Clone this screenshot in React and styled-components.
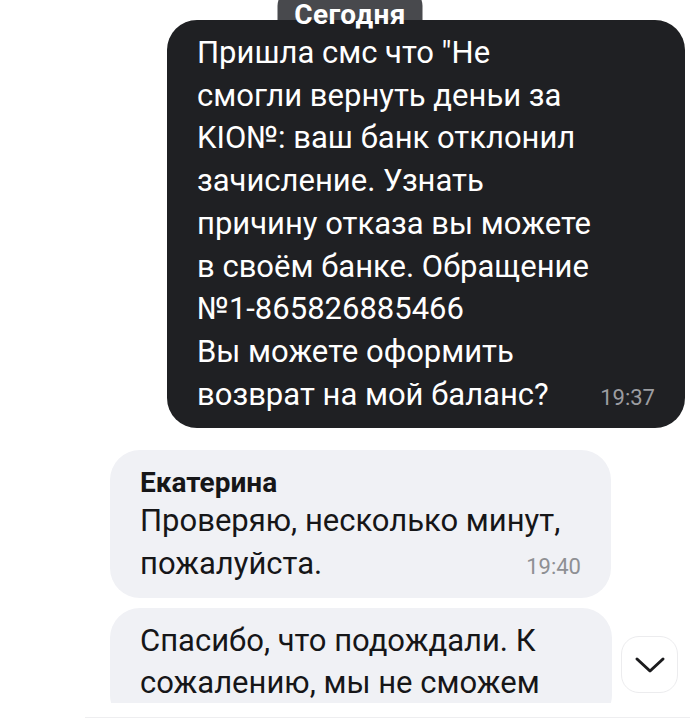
import React from "react";
import styled, { createGlobalStyle } from "styled-components";

const Global = createGlobalStyle`
  html, body { margin: 0; padding: 0; background: #ffffff; }
  body { font-family: Roboto, "Noto Sans", sans-serif; -webkit-font-smoothing: antialiased; }
`;

const Screen = styled.div`
  width: 700px;
  height: 719px;
  overflow: hidden;
  background: #ffffff;
  display: flex;
  flex-direction: column;
`;

const Feed = styled.div`
  position: relative;
  height: 703px;
  overflow: hidden;
  display: flex;
  flex-direction: column;
  padding-top: 20px;
  box-sizing: border-box;
  flex-shrink: 0;
`;

const DatePill = styled.div`
  position: absolute;
  top: -12px;
  left: 50%;
  transform: translateX(-50%);
  width: 145px;
  height: 42px;
  border-radius: 18px 18px 0 0;
  background: linear-gradient(#48494d 0 32px, transparent 32px);
  color: #ffffff;
  font-weight: 700;
  font-size: 28px;
  letter-spacing: 0.4px;
  line-height: 28px;
  text-align: center;
  padding-top: 13px;
  box-sizing: border-box;
  z-index: 2;
`;

const Bubble = styled.div`
  box-sizing: border-box;
  width: ${(p) => p.$w}px;
  align-self: ${(p) => (p.$out ? "flex-end" : "flex-start")};
  margin: ${(p) => (p.$out ? "0 15px 0 0" : "0 0 0 110px")};
  margin-top: ${(p) => p.$mt || 0}px;
  background: ${(p) => (p.$out ? "#1f2023" : "#f0f1f5")};
  color: ${(p) => (p.$out ? "#ffffff" : "#161618")};
  border-radius: 30px;
  padding: ${(p) => p.$pt || 12}px 30px ${(p) => p.$pb || 9}px 30px;
  font-size: 31px;
  line-height: 42.7px;
  flex-shrink: 0;
`;

const Author = styled.div`
  font-weight: 700;
  font-size: 28px;
  line-height: 30px;
  margin-bottom: 2px;
  color: #161618;
`;

const Line = styled.div`
  white-space: nowrap;
  display: flex;
  justify-content: space-between;
  align-items: baseline;
`;

const Time = styled.span`
  font-size: 22px;
  color: ${(p) => (p.$out ? "#9c9da1" : "#8e8f93")};
`;

const ScrollButton = styled.button`
  position: absolute;
  right: 22px;
  bottom: 10px;
  width: 57px;
  height: 57px;
  border-radius: 18px;
  border: 1.5px solid #ececee;
  background: #ffffff;
  display: flex;
  align-items: center;
  justify-content: center;
  padding: 0;
`;

const Composer = styled.div`
  flex: 1;
  position: relative;
  &::after {
    content: "";
    position: absolute;
    left: 85px;
    right: 10px;
    bottom: 1px;
    height: 1px;
    background: #eeeef0;
  }
`;

const outLines = [
  'Пришла смс что "Не',
  "смогли вернуть деньи за",
  "KIO№: ваш банк отклонил",
  "зачисление. Узнать",
  "причину отказа вы можете",
  "в своём банке. Обращение",
  "№1-865826885466",
  "Вы можете оформить",
];

export default function App() {
  return (
    <>
      <Global />
      <Screen>
        <Feed>
          <DatePill>Сегодня</DatePill>
          <Bubble $out $w={518}>
            {outLines.map((l) => (
              <Line key={l}>{l}</Line>
            ))}
            <Line>
              <span>возврат на мой баланс?</span>
              <Time $out>19:37</Time>
            </Line>
          </Bubble>
          <Bubble $w={501} $mt={22} $pt={18}>
            <Author>Екатерина</Author>
            <Line>Проверяю, несколько минут,</Line>
            <Line>
              <span>пожалуйста.</span>
              <Time>19:40</Time>
            </Line>
          </Bubble>
          <Bubble $w={502} $mt={10} $pb={20}>
            <Line>Спасибо, что подождали. К</Line>
            <Line>сожалению, мы не сможем</Line>
          </Bubble>
          <ScrollButton aria-label="Вниз">
            <svg width="32" height="20" viewBox="0 0 32 20" fill="none">
              <path d="M3 4 L16 16 L29 4" stroke="#1b1b1d" strokeWidth="3" strokeLinecap="round" strokeLinejoin="round" />
            </svg>
          </ScrollButton>
        </Feed>
        <Composer />
      </Screen>
    </>
  );
}
